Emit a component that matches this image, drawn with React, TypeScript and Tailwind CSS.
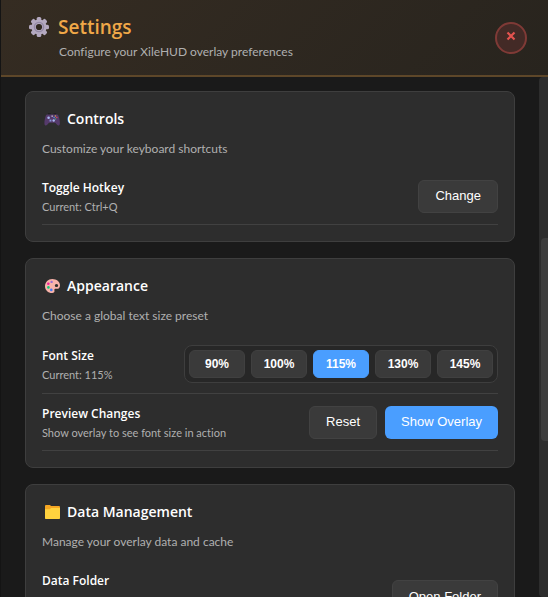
import { useState, type ReactNode } from "react";

function GearIcon() {
  return (
    <svg viewBox="0 0 20 20" className="size-5 shrink-0" aria-hidden="true">
      <g fill="#b4a9c0">
        {[0, 45, 90, 135].map((angle) => (
          <rect key={angle} x="7.7" y="0" width="4.6" height="20" rx="1.6" transform={`rotate(${angle} 10 10)`} />
        ))}
        <circle cx="10" cy="10" r="7.6" />
      </g>
      <circle cx="10" cy="10" r="4.6" fill="none" stroke="#9388a4" strokeWidth="1.4" />
      <circle cx="10" cy="10" r="3.1" fill="#30281f" />
    </svg>
  );
}

function GamepadIcon() {
  return (
    <svg viewBox="0 0 16 16" className="size-4 shrink-0" aria-hidden="true">
      <path d="M4 2.4h2.6v1.2H4zM9.6 2.4h2.6v1.2H9.6z" fill="#17141b" />
      <path
        d="M3.6 3.4h9.1c1 0 1.6.6 1.9 1.6.7 2.2 1.3 5 1.3 7 0 1.8-.6 2.6-1.6 2.6-1.5 0-1.9-2.8-3.5-2.8H5.5c-1.6 0-2 2.8-3.5 2.8-1 0-1.6-.8-1.6-2.6 0-2 .6-4.8 1.3-7 .3-1 .9-1.6 1.9-1.6z"
        fill="#553a6b"
      />
      <circle cx="4.6" cy="6.7" r="1.3" fill="#a9b8f0" />
      <rect x="7.5" y="4.5" width="1.3" height="1.3" fill="#d5d0e2" />
      <rect x="5.5" y="8.6" width="1.9" height="1.9" fill="#8794d8" />
      <circle cx="9.7" cy="9.5" r="1.2" fill="#a9b8f0" />
      <circle cx="11.4" cy="5" r=".8" fill="#d8a04a" />
      <circle cx="10.1" cy="6.5" r=".8" fill="#4d8de0" />
      <circle cx="12.8" cy="6.5" r=".8" fill="#d14a55" />
      <circle cx="11.4" cy="8" r=".8" fill="#43a877" />
    </svg>
  );
}

function PaletteIcon() {
  return (
    <svg viewBox="0 0 16 16" className="size-4 shrink-0" aria-hidden="true">
      <path
        fillRule="evenodd"
        d="M8.3 1C12.6 1 16 3.8 16 7.2c0 2.6-1.6 4-3.6 3.6-1.5-.3-2.3.4-2 1.4.5 1.7-.5 2.8-2.3 2.8C4 15 1 12 1 8.2 1 4.2 4.2 1 8.3 1zm4.2 5a1.7 1.5 0 1 0 0 3 1.7 1.5 0 0 0 0-3z"
        fill="#f8b3aa"
      />
      <circle cx="7.6" cy="3.9" r="1.2" fill="#9a6fd0" />
      <circle cx="4.3" cy="5.8" r="1.3" fill="#f0209a" />
      <circle cx="4.4" cy="9.4" r="1.3" fill="#12c878" />
      <circle cx="7.3" cy="11.9" r="1.3" fill="#3f78f0" />
    </svg>
  );
}

function FolderIcon() {
  return (
    <svg viewBox="0 0 16 16" className="size-4 shrink-0" aria-hidden="true">
      <path d="M1 2.2C1 1.500 1.500 1 2.200 1h3.600l1.400 1h7.600c.7 0 1.200.5 1.200 1.200V8H1z" fill="#f5a623" />
      <path d="M1 5.200h4.600L7.200 4H16v10c0 .6-.4 1-1 1H2c-.6 0-1-.4-1-1z" fill="#ffd23e" />
    </svg>
  );
}

const heading = "font-['Open_Sans','Segoe_UI',sans-serif] font-semibold";
const arial = "font-['Liberation_Sans',Arial,sans-serif]";

function Card({ icon, title, description, children }: { icon: ReactNode; title: string; description: string; children: ReactNode }) {
  return (
    <section className="rounded-lg border border-[#3e3e3e] bg-[#2d2d2d] px-4 pt-[15px] pb-4">
      <h2 className={`flex h-6 items-center gap-[7px] pl-0.5 text-sm text-white ${heading}`}>
        {icon}
        {title}
      </h2>
      <p className="mt-[9px] mb-2.5 text-[12px] leading-[18px] text-[#b0b0b0]">{description}</p>
      {children}
    </section>
  );
}

function Row({ label, hint, tall = false, children }: { label: string; hint?: string; tall?: boolean; children: ReactNode }) {
  return (
    <div className="flex items-center justify-between gap-3 border-b border-[#414141] py-2.5">
      <div className={tall ? "min-h-[51px]" : "min-h-9"}>
        <div className={`text-[12px] leading-5 text-white ${heading}`}>{label}</div>
        {hint && <div className="mt-0.5 text-[11px] leading-[14px] text-[#b0b0b0]">{hint}</div>}
      </div>
      {children}
    </div>
  );
}

function Button({ primary = false, onClick, children }: { primary?: boolean; onClick?: () => void; children: ReactNode }) {
  const tone = primary ? "bg-[#4a9eff]" : "border border-[#424242] bg-[#3a3a3a]";
  return (
    <button type="button" onClick={onClick} className={`h-[33px] rounded-md px-4 text-[13px] text-white ${arial} ${tone}`}>
      {children}
    </button>
  );
}

const presets = [90, 100, 115, 130, 145];

export default function App() {
  const [size, setSize] = useState(115);
  return (
    <div className="flex h-screen flex-col overflow-hidden border-l border-[#141414] bg-[#1a1a1a] font-['Lato','Segoe_UI',sans-serif] [font-variant-ligatures:none]">
      <header className="flex shrink-0 items-center justify-between border-b-2 border-[#5e4729] bg-linear-135 from-[#352c22] to-[#28241e] pt-[15px] pr-[21px] pb-[14px] pl-7">
        <div>
          <h1 className={`flex h-6 items-center gap-[9px] text-[19px] text-[#f0a848] ${heading}`}>
            <GearIcon />
            Settings
          </h1>
          <p className="mt-1 pl-[30px] text-[12px] leading-[18px] text-[#b0b0b0]">Configure your XileHUD overlay preferences</p>
        </div>
        <button
          type="button"
          aria-label="Close"
          className="flex size-8 items-center justify-center rounded-full border-2 border-[#7f3a36] bg-[#432a26] pb-1"
        >
          <svg viewBox="0 0 10 10" className="size-2.5" aria-hidden="true">
            <path d="M1.5 1.5l7 7M8.5 1.5l-7 7" stroke="#e5534f" strokeWidth="2.2" />
          </svg>
        </button>
      </header>

      <div className="flex min-h-0 flex-1">
        <main className="flex min-w-0 flex-1 flex-col gap-4 overflow-hidden px-6 pt-3.5">
          <Card icon={<GamepadIcon />} title="Controls" description="Customize your keyboard shortcuts">
            <Row label="Toggle Hotkey" hint="Current: Ctrl+Q">
              <Button>Change</Button>
            </Row>
          </Card>

          <Card icon={<PaletteIcon />} title="Appearance" description="Choose a global text size preset">
            <Row label="Font Size" hint={`Current: ${size}%`}>
              <div className="flex gap-1.5 rounded-lg border border-[#3e3e3e] bg-[#272727] p-1" role="group" aria-label="Font Size">
                {presets.map((preset) => (
                  <button
                    key={preset}
                    type="button"
                    aria-pressed={preset === size}
                    onClick={() => setSize(preset)}
                    className={`h-7 w-14 rounded-md border text-[12px] font-bold text-white ${arial} ${
                      preset === size ? "border-[#4a9eff] bg-[#4a9eff]" : "border-[#404040] bg-[#3a3a3a]"
                    }`}
                  >
                    {preset}%
                  </button>
                ))}
              </div>
            </Row>
            <Row label="Preview Changes" hint="Show overlay to see font size in action">
              <div className="flex gap-2">
                <Button onClick={() => setSize(100)}>Reset</Button>
                <Button primary>Show Overlay</Button>
              </div>
            </Row>
          </Card>

          <Card icon={<FolderIcon />} title="Data Management" description="Manage your overlay data and cache">
            <Row label="Data Folder" tall>
              <Button>Open Folder</Button>
            </Row>
          </Card>
        </main>

        <div className="flex w-[9px] shrink-0 flex-col rounded-l bg-[#2d2d2d] pl-0.5" aria-hidden="true">
          <div className="h-[31%]" />
          <div className="h-[39%] rounded-l bg-[#3d3d3d]" />
        </div>
      </div>
    </div>
  );
}
